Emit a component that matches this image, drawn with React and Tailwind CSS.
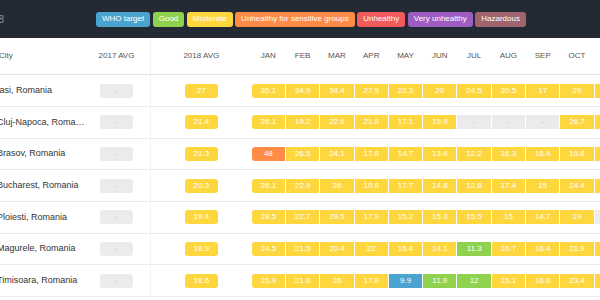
import React from 'react';

const legend = [
  { label: 'WHO target', color: 'bg-[#4ba3cf]' },
  { label: 'Good', color: 'bg-[#8fd24e]' },
  { label: 'Moderate', color: 'bg-[#fed63e]' },
  { label: 'Unhealthy for sensitive groups', color: 'bg-[#ff8b47]' },
  { label: 'Unhealthy', color: 'bg-[#f25b5b]' },
  { label: 'Very unhealthy', color: 'bg-[#9e5cc0]' },
  { label: 'Hazardous', color: 'bg-[#a0646f]' }
];

const months = ['JAN', 'FEB', 'MAR', 'APR', 'MAY', 'JUN', 'JUL', 'AUG', 'SEP', 'OCT', 'NOV', 'DEC'];

const rows = [
  { city: 'Iasi, Romania', avg17: null, avg18: 27, data: [35.1, 34.9, 34.4, 27.9, 22.3, 20, 24.5, 20.5, 17, 29, 31.2, 33.5] },
  { city: 'Cluj-Napoca, Romania', avg17: null, avg18: 21.4, data: [26.1, 19.2, 22.6, 21.8, 17.1, 15.9, null, null, null, 26.7, 27.4, 30.1] },
  { city: 'Brasov, Romania', avg17: null, avg18: 21.3, data: [48, 26.5, 24.1, 17.8, 14.7, 13.4, 12.2, 16.3, 16.4, 19.8, 22.5, 26.3] },
  { city: 'Bucharest, Romania', avg17: null, avg18: 20.3, data: [26.1, 22.9, 26, 19.8, 17.7, 14.8, 12.8, 17.4, 15, 24.4, 23.1, 22.8] },
  { city: 'Ploiesti, Romania', avg17: null, avg18: 19.4, data: [28.5, 22.7, 29.5, 17.9, 15.2, 15.3, 15.5, 15, 14.7, 19, null, null] },
  { city: 'Magurele, Romania', avg17: null, avg18: 18.9, data: [24.5, 21.5, 20.4, 22, 16.4, 14.1, 11.3, 16.7, 16.4, 21.9, 19.6, 22.2] },
  { city: 'Timisoara, Romania', avg17: null, avg18: 18.6, data: [25.9, 21.6, 26, 17.8, 9.9, 11.9, 12, 15.1, 16.6, 23.4, 21.7, 24.1] }
];

const levelColor = (v) => {
  if (v === null) return 'bg-[#ebebed] text-[#c4c4c4]';
  if (v <= 10) return 'bg-[#4ba3cf] text-white';
  if (v <= 12) return 'bg-[#8fd24e] text-white';
  if (v <= 35.4) return 'bg-[#fed63e] text-white';
  if (v <= 55.4) return 'bg-[#ff8b47] text-white';
  return 'bg-[#f25b5b] text-white';
};

const Cell = ({ value, className = '' }) => (
  <div className={`h-[14px] flex items-center justify-center text-[8px] leading-none ${levelColor(value)} ${className}`}>
    {value === null ? '-' : value}
  </div>
);

const App = () => {
  return (
    <div className="w-[600px] h-[300px] overflow-hidden bg-white font-['Liberation_Sans',Arial,sans-serif]">
      {/* top bar with legend */}
      <div className="h-[38px] bg-[#232a33] flex items-center">
        <div className="w-[4px] overflow-hidden flex justify-end shrink-0">
          <span className="text-[10px] text-[#8e96a0] whitespace-nowrap">2018</span>
        </div>
        <div className="ml-[92px] flex gap-[2.5px]">
          {legend.map(item => (
            <span
              key={item.label}
              className={`h-[15px] px-[6px] rounded-[3px] flex items-center text-[8px] text-white whitespace-nowrap ${item.color}`}
            >
              {item.label}
            </span>
          ))}
        </div>
      </div>

      {/* table */}
      <div className="-ml-[3px] w-[720px]">
        <div className="h-[37.3px] flex items-center border-b border-[#e3e3e3] text-[8px] text-[#555]">
          <div className="w-[90px] shrink-0 pl-[2px]">City</div>
          <div className="w-[63px] shrink-0 pr-[4px] text-center">2017 AVG</div>
          <div className="w-[101.7px] h-full shrink-0 border-l border-[#f1f1f1] flex items-center justify-center">
            2018 AVG
          </div>
          <div className="flex gap-px">
            {months.map(m => (
              <div key={m} className="w-[33.3px] text-center">{m}</div>
            ))}
          </div>
        </div>

        {rows.map(row => (
          <div key={row.city} className="h-[31.7px] flex items-center border-b border-[#ececec]">
            <div className="w-[90px] shrink-0 pr-[1px] text-[9px] text-[#333] truncate">{row.city}</div>
            <div className="w-[63px] shrink-0 pr-[4px] flex justify-center">
              <Cell value={row.avg17} className="w-[33px] rounded-[3px]" />
            </div>
            <div className="w-[101.7px] h-full shrink-0 border-l border-[#f1f1f1] flex items-center justify-center">
              <Cell value={row.avg18} className="w-[33.4px] rounded-[3px]" />
            </div>
            <div className="flex gap-px">
              {row.data.map((v, i) => (
                <Cell
                  key={months[i]}
                  value={v}
                  className={`w-[33.3px] ${i === 0 ? 'rounded-l-[3px]' : ''} ${i === 11 ? 'rounded-r-[3px]' : ''}`}
                />
              ))}
            </div>
          </div>
        ))}
      </div>
    </div>
  );
};

export default App;
